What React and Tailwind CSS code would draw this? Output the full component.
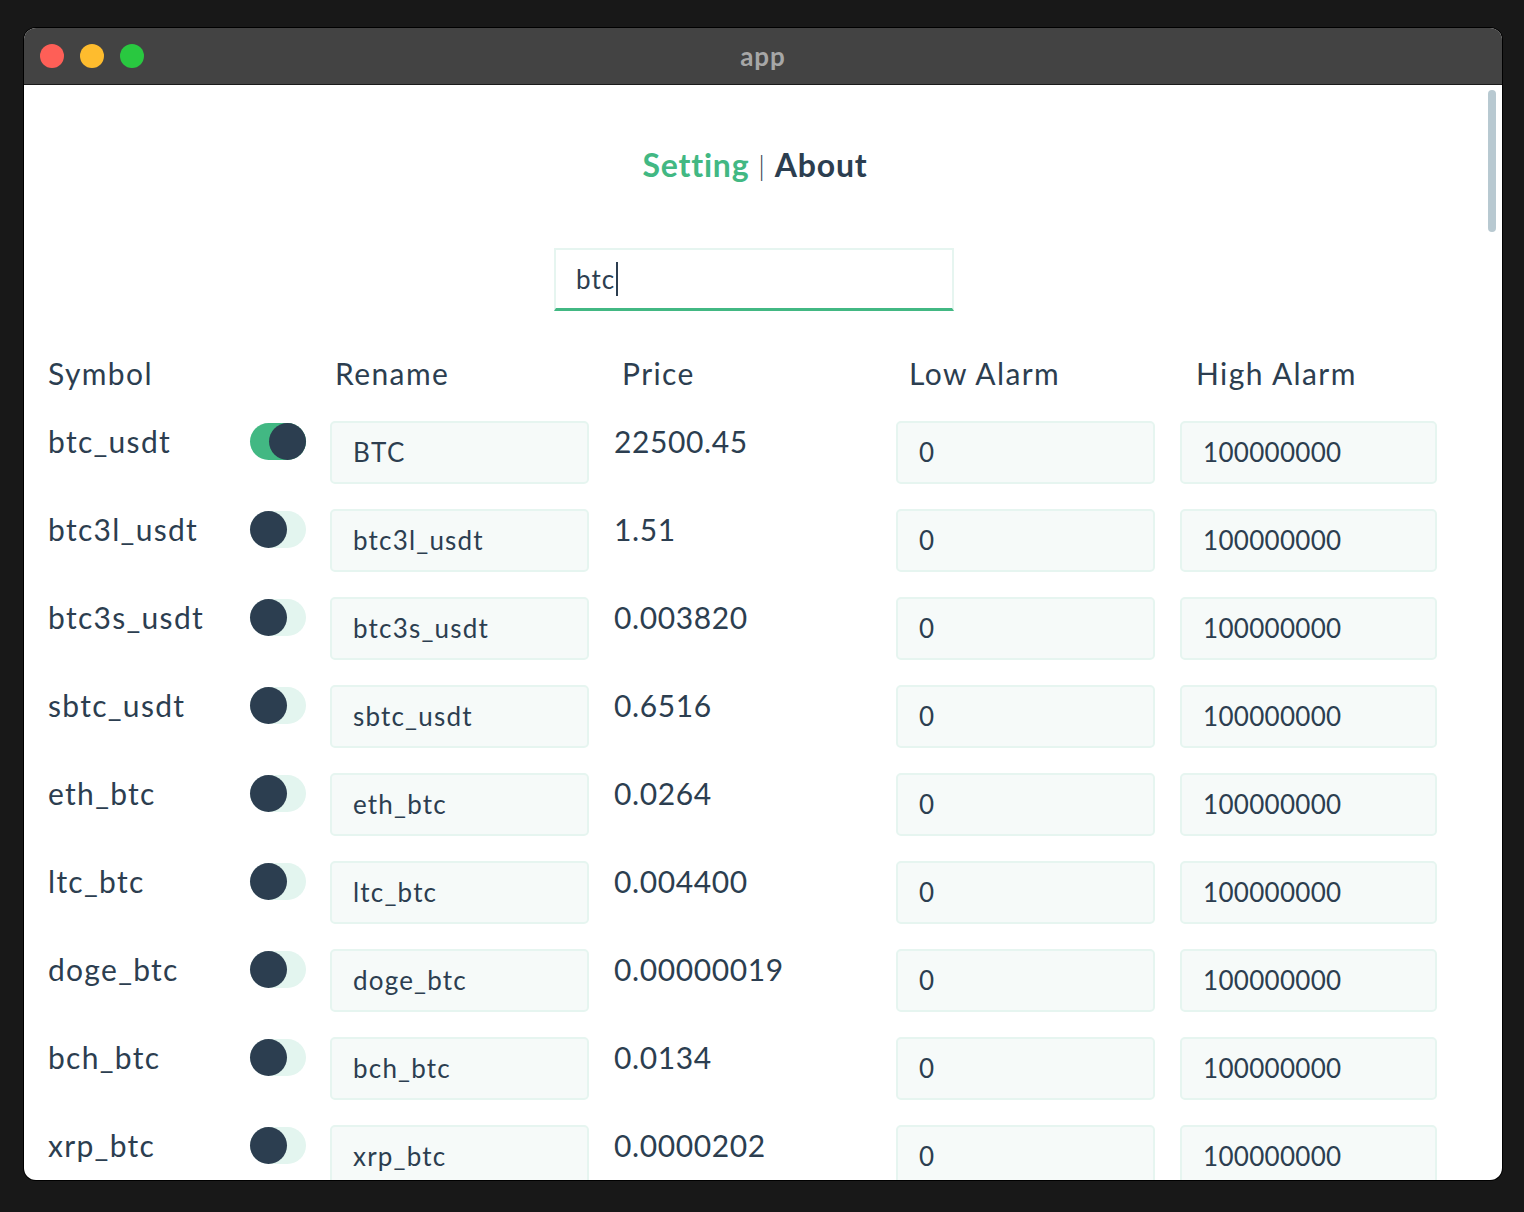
import React, { useState } from 'react';

const rows = [
  { symbol: 'btc_usdt', name: 'BTC', price: '22500.45', on: true },
  { symbol: 'btc3l_usdt', name: 'btc3l_usdt', price: '1.51' },
  { symbol: 'btc3s_usdt', name: 'btc3s_usdt', price: '0.003820' },
  { symbol: 'sbtc_usdt', name: 'sbtc_usdt', price: '0.6516' },
  { symbol: 'eth_btc', name: 'eth_btc', price: '0.0264' },
  { symbol: 'ltc_btc', name: 'ltc_btc', price: '0.004400' },
  { symbol: 'doge_btc', name: 'doge_btc', price: '0.00000019' },
  { symbol: 'bch_btc', name: 'bch_btc', price: '0.0134' },
  { symbol: 'xrp_btc', name: 'xrp_btc', price: '0.0000202' },
];

const Toggle = ({ on }) => (
  <div
    className={`w-[56px] h-[37px] rounded-full flex items-center ${
      on ? 'bg-[#42b883] justify-end' : 'bg-[#e3f5ef] justify-start'
    }`}
  >
    <div className="w-[37px] h-[37px] rounded-full bg-[#2c3e50]" />
  </div>
);

const Field = ({ value, w = 'w-[259px]', track = 'tracking-[1px]' }) => (
  <div
    className={`${w} ${track} h-[63px] shrink-0 rounded-[5px] border-2 border-[#e6f5f0] bg-[#f6faf9] flex items-center pl-[21px] text-[26px] text-[#2c3e50]`}
  >
    {value}
  </div>
);

const Row = ({ row }) => (
  <div className="flex items-start h-[88px]">
    <div className="w-[202px] shrink-0 text-[30px] leading-[40px] tracking-[1.3px]">{row.symbol}</div>
    <div className="w-[80px] shrink-0 pt-[2px]">
      <Toggle on={row.on} />
    </div>
    <Field value={row.name} track={row.on ? 'tracking-[1.5px]' : 'tracking-[1.2px]'} />
    <div className="w-[307px] shrink-0 pl-[25px] text-[30px] leading-[40px] tracking-[0.6px]">{row.price}</div>
    <Field value="0" track="tracking-normal" />
    <div className="w-[25px] shrink-0" />
    <Field value="100000000" w="w-[257px]" track="tracking-[0.3px]" />
  </div>
);

export default function App() {
  const [query] = useState('btc');

  return (
    <div
      className="min-h-[1212px] bg-[#181818] pt-[28px] pl-[24px]"
      style={{ fontFamily: 'Lato, "Noto Sans", sans-serif' }}
    >
      <div className="w-[1478px] h-[1152px] rounded-[12px] overflow-hidden bg-white flex flex-col shadow-[0_0_0_1px_#000]">
        {/* title bar */}
        <div className="relative h-[57px] shrink-0 bg-[#434343] border-b border-[#1a1a1a] flex items-center px-[16px] gap-[16px]">
          <span className="w-[24px] h-[24px] rounded-full bg-[#fe5f57]" />
          <span className="w-[24px] h-[24px] rounded-full bg-[#febc2e]" />
          <span className="w-[24px] h-[24px] rounded-full bg-[#29c840]" />
          <div className="absolute inset-0 flex items-center justify-center text-[26px] font-bold tracking-[1px] text-[#a7a7a7]">
            app
          </div>
        </div>

        {/* content */}
        <div className="relative flex-1 overflow-hidden text-[#2c3e50]">
          <div className="pt-[60px] pr-[18px] flex flex-col items-center">
            <div className="text-[32px] leading-[40px] font-bold tracking-[0.8px] flex items-center gap-[9px] ml-[2px]">
              <span className="text-[#42b883]">Setting</span>
              <span className="font-light text-[28px]">|</span>
              <span>About</span>
            </div>
            <div className="mt-[63px] w-[400px] h-[63px] border-2 border-[#e6f5f0] border-b-[3px] border-b-[#42b883] flex items-center pl-[20px] text-[26px] tracking-[1px]">
              {query}
              <span className="w-[2px] h-[34px] bg-[#2c3e50] ml-[1px]" />
            </div>
          </div>

          <div className="pl-[24px] mt-[42px]">
            <div className="flex text-[30px] leading-[40px] h-[68px] tracking-[1.4px]">
              <div className="w-[287px]">Symbol</div>
              <div className="w-[287px]">Rename</div>
              <div className="w-[287px]">Price</div>
              <div className="w-[287px]">Low Alarm</div>
              <div className="w-[287px]">High Alarm</div>
            </div>
            {rows.map((row) => (
              <Row key={row.symbol} row={row} />
            ))}
          </div>

          {/* scrollbar thumb */}
          <div className="absolute right-[6px] top-[5px] w-[8px] h-[142px] rounded-full bg-[#b8c9d1]" />
        </div>
      </div>
    </div>
  );
}
